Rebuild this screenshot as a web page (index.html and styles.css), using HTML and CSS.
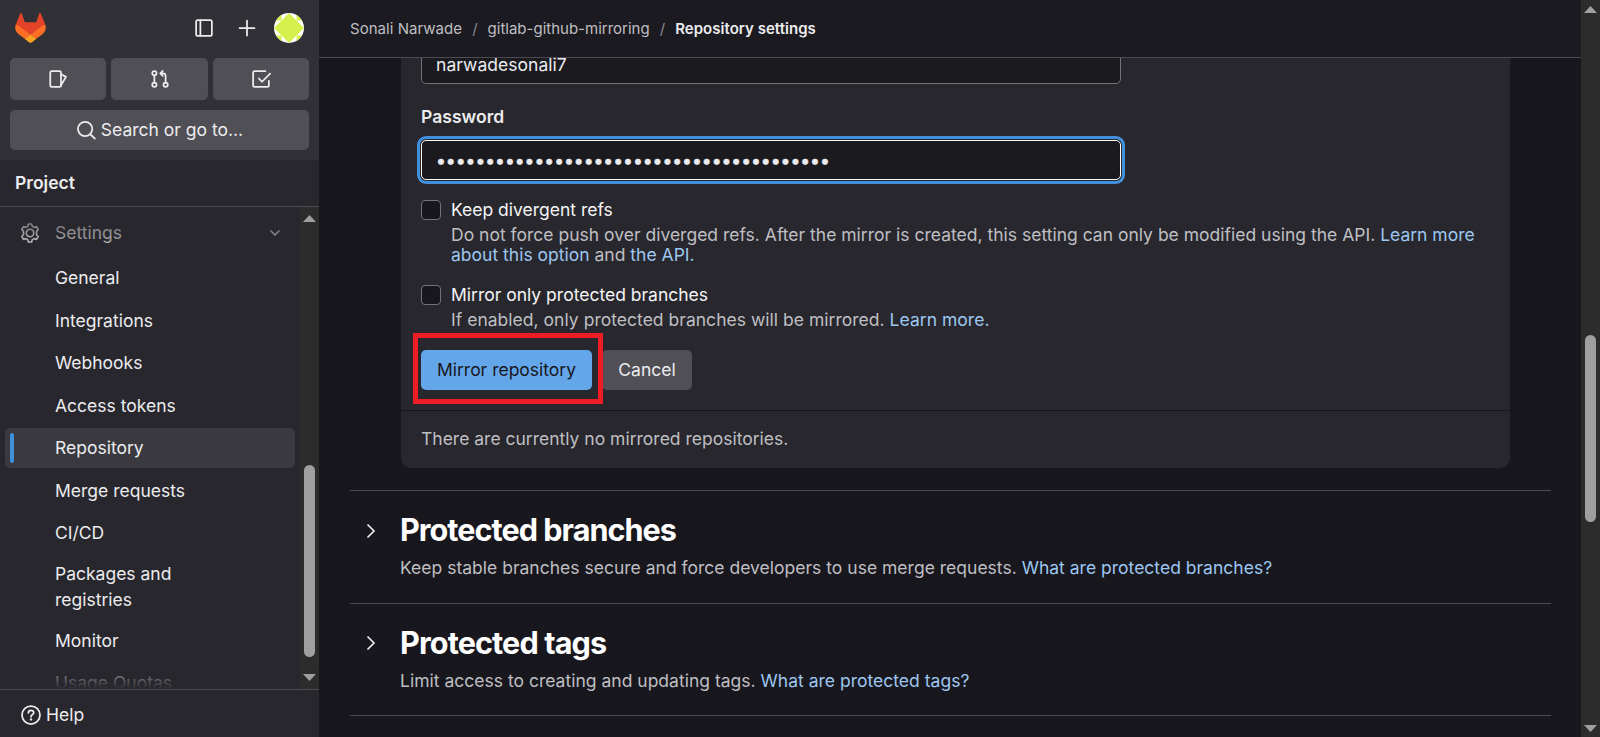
FILE: index.html
```
<!DOCTYPE html>
<html lang="en">
<head>
<meta charset="utf-8">
<title>Repository settings</title>
<link rel="stylesheet" href="styles.css">
</head>
<body>
<div class="app">
  <aside class="sidebar">
    <div class="topbar">
      <div class="brand-row">
        <svg class="logo" viewBox="0 0 31 30"><path fill="#e24329" d="M15.5 9.200H21.200L24.200 .6C24.500-.1 25.500-.1 25.800.6L30.300 11.700 15.500 22 .7 11.700 5.200.6C5.500-.1 6.500-.1 6.800.6L9.800 9.200z"/><path fill="#fc6d26" d="M.7 11.700C-.6 15.200.6 18.800 3.300 20.900L10 26 15.500 21.800 6.700 14.900C5 13.600 2.800 12.400.7 11.700zM30.300 11.700C31.600 15.200 30.400 18.800 27.700 20.900L21 26 15.500 21.800 24.300 14.900C26 13.600 28.200 12.400 30.300 11.700z"/><path fill="#fca326" d="M9.800 25.900 15.500 21.600 21.200 25.900 17 29.200C16.100 29.900 14.900 29.900 14 29.200z"/></svg>
        <svg class="ico toggle" viewBox="0 0 16 16"><rect x="1.700" y="1.700" width="12.600" height="12.600" rx="1.300"/><path d="M5.100 1.700v12.600"/></svg>
        <svg class="ico plus" viewBox="0 0 16 16"><path d="M8 2v12M2 8h12"/></svg>
        <svg class="avatar" viewBox="0 0 30 30"><defs><clipPath id="av"><circle cx="15" cy="15" r="15"/></clipPath></defs><g clip-path="url(#av)"><path fill="#fff" d="M0 0h30v30H0z"/><path fill="#d6f04e" d="M15 0 30 15 15 30 0 15zM7.500 0v7.500L0 7.500zM22.500 0v7.500H30zM7.500 30v-7.500H0zM22.500 30v-7.500H30z"/></g></svg>
      </div>
      <div class="counters">
        <button class="tile"><svg class="ico" viewBox="0 0 16 16"><rect x="1.800" y="1.700" width="8.600" height="12.600" rx="1.300"/><path d="M10.400 4.200 14.400 6.300 10.400 13"/></svg></button>
        <button class="tile"><svg class="ico" viewBox="0 0 16 16"><circle cx="3.500" cy="3.400" r="1.700"/><circle cx="3.500" cy="12.600" r="1.700"/><circle cx="12.500" cy="12.600" r="1.700"/><path d="M3.500 5.100v5.800M12.500 10.900V5.500Q12.500 3.500 10.500 3.500H8.600M10.200 1.500 8.200 3.500 10.200 5.500"/></svg></button>
        <button class="tile"><svg class="ico" viewBox="0 0 16 16"><path d="M11.500 1.700H3Q1.700 1.700 1.700 3v10q0 1.300 1.300 1.300h10q1.300 0 1.300-1.300V9.500M6.300 7.600l2.500 2.600 6.500-6.500"/></svg></button>
      </div>
      <button class="search"><svg class="ico" viewBox="0 0 16 16"><circle cx="7.300" cy="7.200" r="5.700"/><path d="m11.500 11.400 3.600 3.500"/></svg><span class="search-text">Search or go to…</span></button>
    </div>
    <div class="context">Project</div>
    <div class="nav-wrap">
      <nav class="nav">
        <a class="item parent"><svg class="ico gear" viewBox="0 0 16 16"><path d="M6.700.8h2.600l.5 1.900 1.500.8 1.900-.6 1.400 2.300-1.400 1.500v2.600l1.400 1.500-1.400 2.300-1.900-.6-1.500.8-.5 1.900H6.700l-.5-1.900-1.500-.8-1.900.6-1.400-2.300 1.400-1.500V6.700L1.400 5.200l1.400-2.300 1.900.6 1.500-.8z"/><circle cx="8" cy="8" r="3"/></svg><span>Settings</span><svg class="chev" viewBox="0 0 12 12"><path d="m1.500 3.500 4.500 4.500 4.500-4.500"/></svg></a>
        <a class="item">General</a>
        <a class="item">Integrations</a>
        <a class="item">Webhooks</a>
        <a class="item">Access tokens</a>
        <a class="item active">Repository</a>
        <a class="item">Merge requests</a>
        <a class="item">CI/CD</a>
        <a class="item">Packages and<br>registries</a>
        <a class="item">Monitor</a>
        <a class="item">Usage Quotas</a>
      </nav>
      <div class="scrollbar nav-bar"><i class="arrow up"></i><i class="thumb"></i><i class="arrow down"></i></div>
    </div>
    <div class="help"><svg class="ico" viewBox="0 0 16 16"><circle cx="8" cy="8" r="7.200"/><path d="M5.900 6.300C5.900 3.600 10.300 3.700 10.200 6.200 10.100 7.600 8 7.700 8 9.400"/><circle class="dot" cx="8" cy="11.500" r=".95"/></svg><span>Help</span></div>
  </aside>
  <main class="main">
    <header class="crumbs"><span class="c1">Sonali Narwade</span><i>/</i><span class="c2">gitlab-github-mirroring</span><i>/</i><b>Repository settings</b></header>
    <div class="content">
      <section class="panel">
        <div class="form">
          <div class="field user">narwadesonali7</div>
          <div class="label">Password</div>
          <div class="field focus"><span class="dots">••••••••••••••••••••••••••••••••••••••••</span></div>
          <div class="check"><span class="box"></span><div><div class="name">Keep divergent refs</div><div class="hint">Do not force push over diverged refs. After the mirror is created, this setting can only be modified using the API. <a>Learn more<br>about this option</a> and <a>the API.</a></div></div></div>
          <div class="check second"><span class="box"></span><div><div class="name">Mirror only protected branches</div><div class="hint">If enabled, only protected branches will be mirrored. <a>Learn more.</a></div></div></div>
          <div class="actions"><button class="btn primary">Mirror repository</button><button class="btn cancel">Cancel</button><span class="highlight"></span></div>
        </div>
        <div class="empty">There are currently no mirrored repositories.</div>
      </section>
      <section class="block first"><svg class="expand" viewBox="0 0 10 16"><path d="m1.500 1.500 6.500 6.500-6.500 6.500"/></svg><div><h2>Protected branches</h2><p>Keep stable branches secure and force developers to use merge requests. <a>What are protected branches?</a></p></div></section>
      <section class="block tags"><svg class="expand" viewBox="0 0 10 16"><path d="m1.500 1.500 6.500 6.500-6.500 6.500"/></svg><div><h2>Protected tags</h2><p>Limit access to creating and updating tags. <a>What are protected tags?</a></p></div></section>
      <div class="block last"></div>
    </div>
  </main>
  <div class="scrollbar page-bar"><i class="arrow up"></i><i class="thumb"></i><i class="arrow down"></i></div>
</div>
</body>
</html>
```
FILE: styles.css
```
* { box-sizing: border-box; }
body { margin: 0; background: #18171d; color: #ececef; font: 17.5px/26.25px Inter, sans-serif; overflow: hidden; }
button { font: inherit; color: inherit; border: 0; padding: 0; border-radius: 5px; }
svg { display: block; flex: none; }
.app { display: flex; width: 1600px; height: 737px; }
.ico { width: 20px; height: 20px; fill: none; stroke: #ececef; stroke-width: 1.4; stroke-linejoin: round; stroke-linecap: round; }

.sidebar { width: 319px; flex: none; display: flex; flex-direction: column; background: #28272d; }
.topbar { height: 160px; background: #303036; padding: 13px 10px 0; }
.brand-row { display: flex; align-items: center; height: 30px; padding: 0 5px; }
.logo { width: 31px; height: 30px; margin-right: auto; }
.toggle { margin-right: 23px; }
.plus { margin-right: 17px; }
.avatar { width: 30px; height: 30px; }
.counters { display: grid; grid-template-columns: 96px 97px 96px; gap: 5px; margin-top: 15px; }
.tile { height: 42px; background: #504f55; display: flex; align-items: center; justify-content: center; }
.search { width: 299px; height: 40px; margin-top: 10px; background: #504f55; display: flex; align-items: center; justify-content: center; gap: 5px; }
.context { height: 47px; border-bottom: 1px solid #4c4b51; padding: 10px 15px; font-weight: 600; letter-spacing: .03px; }
.nav-wrap { height: 482px; display: flex; position: relative; overflow: hidden; }
.nav-wrap::before, .nav-wrap::after { content: ""; position: absolute; left: 0; width: 300px; z-index: 1; }
.nav-wrap::before { top: 0; height: 44px; background: linear-gradient(#28272dcc, #28272d00); }
.nav-wrap::after { bottom: 0; height: 34px; background: linear-gradient(#28272d00, #28272d); }
.nav { width: 300px; padding: 6px 5px 0; display: flex; flex-direction: column; gap: 2.5px; }
.item { position: relative; flex: none; display: block; min-height: 40px; padding: 7.100px 10px 5.900px 50px; border-radius: 5px; }
.item:nth-child(9) { height: 62.5px; padding-top: 5px; }
.parent { display: flex; align-items: center; padding: 0 14px 0 15px; margin-bottom: 2.5px; color: #bfbfc3; }
.parent span { margin: 0 auto 0 15px; }
.parent .ico { stroke: #d2d2d6; stroke-width: 1.300; }
.chev { width: 12px; height: 12px; fill: none; stroke: #b4b3b8; stroke-width: 1.500; }
.active { background: #3a393f; }
.active::before { content: ""; position: absolute; left: 5px; top: 5px; width: 4px; height: 30px; border-radius: 2px; background: #428fdc; }
.help { flex: 1; border-top: 1px solid #4c4b51; display: flex; align-items: center; gap: 5px; padding: 3px 21px 0; }
.help .dot { fill: #ececef; stroke: none; }

.scrollbar { width: 19px; flex: none; background: #2c2c2c; display: flex; flex-direction: column; align-items: center; }
.arrow { width: 13px; height: 7px; background: #9f9f9f; }
.up { clip-path: polygon(50% 0, 100% 100%, 0 100%); }
.down { clip-path: polygon(0 0, 100% 0, 50% 100%); margin-top: auto; }
.thumb { width: 11px; border-radius: 6px; background: #9f9f9f; }
.nav-bar { padding: 8px 0; }
.nav-bar .thumb { height: 192px; margin-top: 243px; }
.page-bar { padding: 6px 0 5px; }
.page-bar .thumb { height: 187px; margin-top: 322px; }

.main { flex: 1; display: flex; flex-direction: column; overflow: hidden; }
.crumbs { flex: none; height: 58px; border-bottom: 1px solid #4c4b51; background: #1b1a20; display: flex; align-items: center; padding: 2px 0 0 31px; font-size: 15px; color: #bfbfc3; }
.crumbs .c1 { letter-spacing: .04px; }
.crumbs i { font-style: normal; width: 25.5px; text-align: center; color: #89888d; }
.crumbs b { font-weight: 600; color: #ececef; letter-spacing: .03px; }
.content { flex: 1; overflow: hidden; padding: 0 30px 0 31px; }
.panel { margin: 0 41px 0 51px; height: 410px; background: #28272d; border-radius: 0 0 10px 10px; }
.form { height: 353px; border-bottom: 1px solid #18171d; padding: 0 20px; overflow: hidden; }
.field { width: 700px; height: 40px; border: 1px solid #737278; border-radius: 5px; background: #1b1a1f; padding: 7px 14px 5px; line-height: 26px; }
.user { margin-top: -14px; letter-spacing: .04px; }
.label { margin-top: 20px; height: 36px; font-weight: 600; line-height: 26px; letter-spacing: .03px; }
.focus { border-color: #fff; box-shadow: 0 0 0 1px #28272d, 0 0 0 4px #428fdc; }
.dots { -webkit-text-stroke: .6px #ececef; }
.check { display: flex; gap: 10px; margin-top: 17px; height: 68px; }
.box { flex: none; width: 20px; height: 20px; margin-top: 3px; border: 1px solid #737278; border-radius: 4px; background: #18171d; }
.name { line-height: 26px; color: #f4f4f6; }
.hint { line-height: 20px; margin-top: 2px; color: #bfbfc3; white-space: nowrap; letter-spacing: .005px; }
.check a, .block a { color: #9dc7f1; }
.check.second { height: 51px; }
.second .hint { letter-spacing: .025px; }
.actions { position: relative; display: flex; gap: 10px; margin-top: 17px; }
.btn { height: 40px; background: #504f55; width: 90px; }
.btn.primary { background: #63a6e9; color: #18171d; width: 171px; }
.highlight { position: absolute; left: -8px; top: -17px; width: 190px; height: 71px; border: 5px solid #ee1c24; }
.empty { padding: 15px 20px; color: #bfbfc3; }
.block { border-top: 1px solid #4c4b51; height: 112px; display: flex; padding-left: 16px; }
.block.first { margin-top: 22px; height: 113px; }
.expand { width: 10px; height: 16px; margin: 32px 24px 0 0; fill: none; stroke: #ececef; stroke-width: 1.700; }
.tags .expand { margin-top: 31px; }
h2 { margin: 20px 0 0; font-size: 30.6px; line-height: 38px; font-weight: 650; letter-spacing: -.032em; color: #fff; }
.tags h2 { letter-spacing: -.029em; }
p { margin: 6px 0 0; color: #bfbfc3; letter-spacing: .01px; }
```
